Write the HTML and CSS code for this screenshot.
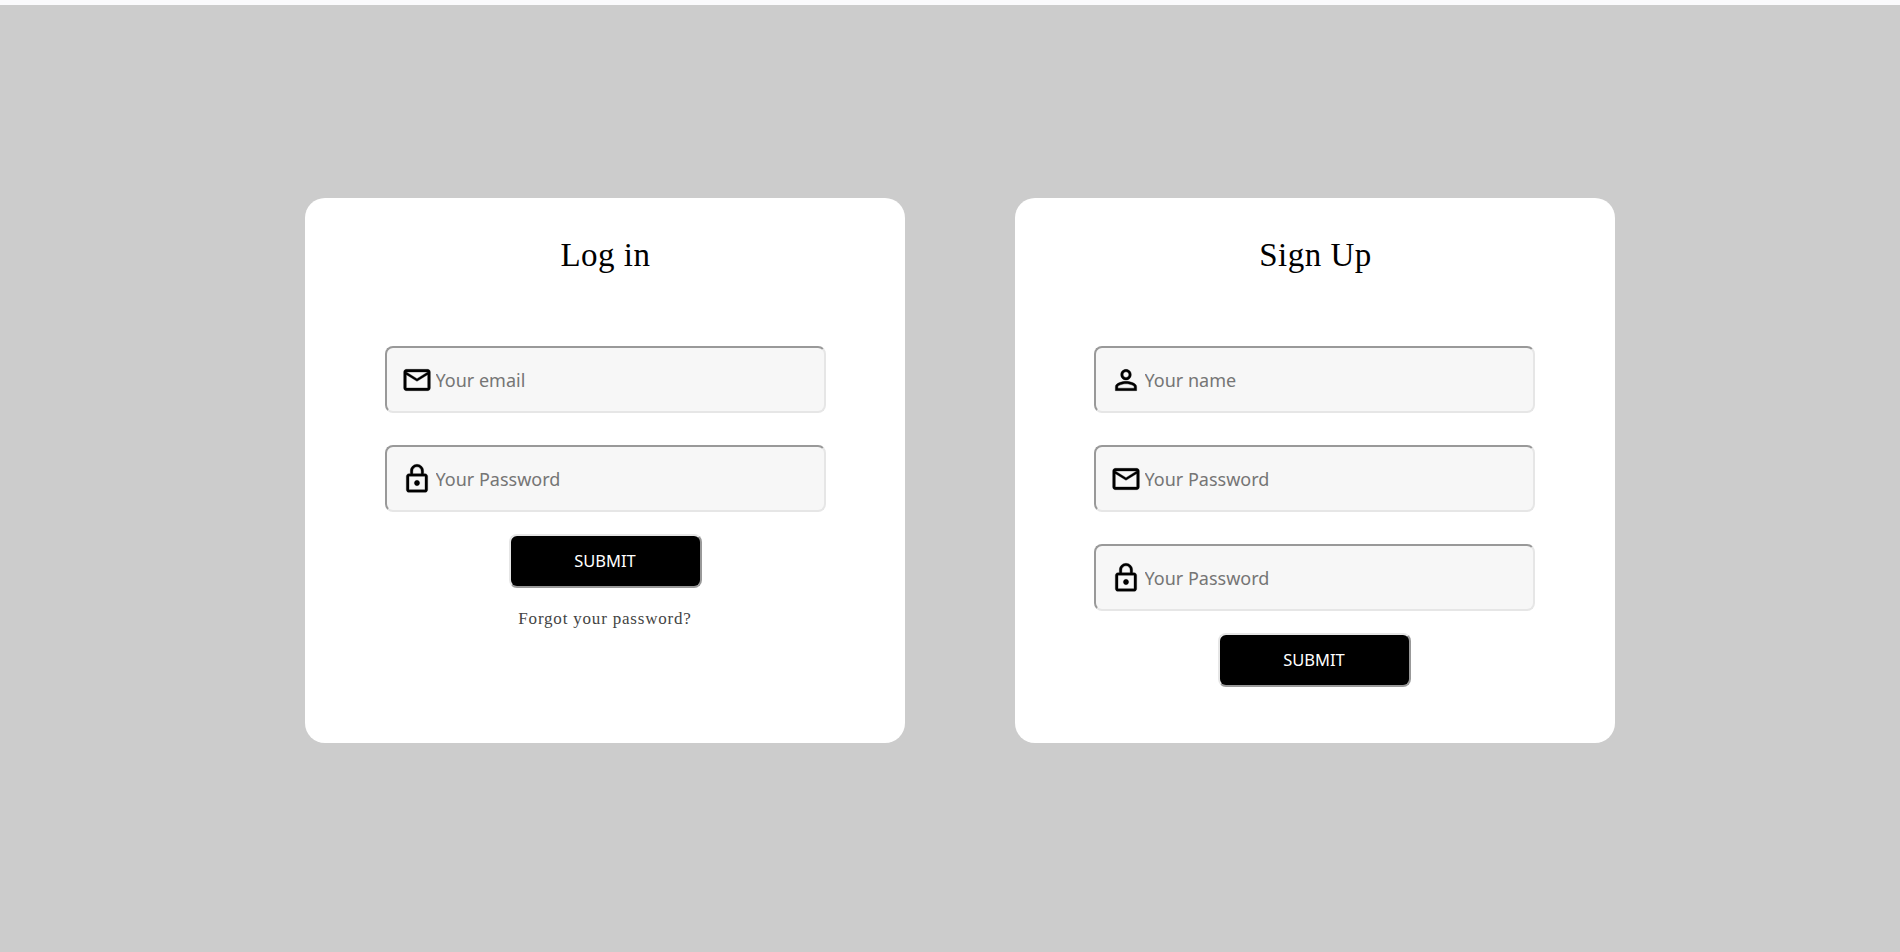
FILE: index.html
```html
<!DOCTYPE html>
<html lang="en">
<head>
    <meta charset="UTF-8">
    <title>Log in / Sign Up</title>
    <link rel="stylesheet" href="styles.css">
</head>
<body>
    <div class="top-strip"></div>
    <div class="forms">
        <form class="card">
            <h2>Log in</h2>
            <label class="field">
                <svg class="icon" viewBox="0 0 24 24"><path d="M20 4H4c-1.1 0-1.99.9-1.99 2L2 18c0 1.1.9 2 2 2h16c1.1 0 2-.9 2-2V6c0-1.1-.9-2-2-2zm0 14H4V8l8 5 8-5v10zm-8-7L4 6h16l-8 5z"/></svg>
                <input type="text" placeholder="Your email">
            </label>
            <label class="field">
                <svg class="icon" viewBox="0 0 24 24"><path d="M12 17c1.1 0 2-.9 2-2s-.9-2-2-2-2 .9-2 2 .9 2 2 2zm6-9h-1V6c0-2.76-2.24-5-5-5S7 3.24 7 6v2H6c-1.1 0-2 .9-2 2v10c0 1.1.9 2 2 2h12c1.1 0 2-.9 2-2V10c0-1.1-.9-2-2-2zM8.9 6c0-1.71 1.39-3.1 3.1-3.1s3.1 1.39 3.1 3.1v2H8.9V6zM18 20H6V10h12v10z"/></svg>
                <input type="password" placeholder="Your Password">
            </label>
            <button type="button" class="submit-btn">SUBMIT</button>
            <a class="forgot">Forgot your password?</a>
        </form>
        <form class="card">
            <h2>Sign Up</h2>
            <label class="field">
                <svg class="icon" viewBox="0 0 24 24"><path d="M12 5.9c1.16 0 2.1.94 2.1 2.1s-.94 2.1-2.1 2.1S9.9 9.16 9.9 8s.94-2.1 2.1-2.1m0 9c2.97 0 6.1 1.46 6.1 2.1v1.1H5.9V17c0-.64 3.13-2.1 6.1-2.1M12 4C9.79 4 8 5.79 8 8s1.79 4 4 4 4-1.79 4-4-1.79-4-4-4zm0 9c-2.67 0-8 1.34-8 4v3h16v-3c0-2.66-5.33-4-8-4z"/></svg>
                <input type="text" placeholder="Your name">
            </label>
            <label class="field">
                <svg class="icon" viewBox="0 0 24 24"><path d="M20 4H4c-1.1 0-1.99.9-1.99 2L2 18c0 1.1.9 2 2 2h16c1.1 0 2-.9 2-2V6c0-1.1-.9-2-2-2zm0 14H4V8l8 5 8-5v10zm-8-7L4 6h16l-8 5z"/></svg>
                <input type="text" placeholder="Your Password">
            </label>
            <label class="field">
                <svg class="icon" viewBox="0 0 24 24"><path d="M12 17c1.1 0 2-.9 2-2s-.9-2-2-2-2 .9-2 2 .9 2 2 2zm6-9h-1V6c0-2.76-2.24-5-5-5S7 3.24 7 6v2H6c-1.1 0-2 .9-2 2v10c0 1.1.9 2 2 2h12c1.1 0 2-.9 2-2V10c0-1.1-.9-2-2-2zM8.9 6c0-1.71 1.39-3.1 3.1-3.1s3.1 1.39 3.1 3.1v2H8.9V6zM18 20H6V10h12v10z"/></svg>
                <input type="password" placeholder="Your Password">
            </label>
            <button type="button" class="submit-btn">SUBMIT</button>
        </form>
    </div>
</body>
</html>
```
FILE: styles.css
```css
body { margin: 0; background: #ccc; font-family: "Liberation Serif", serif; overflow: hidden; }
.top-strip { height: 5px; background: #fafafc; }
.forms { display: flex; gap: 110px; padding: 193px 0 0 305px; }
.card { box-sizing: border-box; width: 600px; height: 545px; padding-top: 36px; background: #fff; border-radius: 20px; display: flex; flex-direction: column; align-items: center; }
h2 { margin: 0 0 76px; padding-left: 1px; height: 36px; line-height: 42px; font-size: 33px; font-weight: normal; letter-spacing: 0.5px; color: #000; }
.field { box-sizing: border-box; width: 441px; height: 67px; margin-bottom: 32px; padding-left: 14px; display: flex; align-items: center; background: #f7f7f7; border: 2px solid; border-color: #999 #e6e6e6 #e6e6e6 #999; border-radius: 8px; }
.card + .card .field, .card + .card .submit-btn { margin-right: 2px; }
.icon { width: 32px; height: 32px; flex: none; fill: #000; stroke: #000; stroke-width: 0.25; }
.field input { flex: 1; min-width: 0; padding: 1px 0 0 3px; border: none; outline: none; background: transparent; font-family: "Noto Sans", sans-serif; font-size: 18px; color: #333; }
.field input::placeholder { color: #757575; opacity: 1; }
.submit-btn { width: 193px; height: 54px; margin-top: -10px; padding: 0 0 2px; background: #000; color: #fff; border: 2px solid; border-color: #e6e6e6 #999 #999 #e6e6e6; border-radius: 8px; font-family: "Noto Sans", sans-serif; font-size: 16.5px; }
.forgot { margin-top: 21px; font-size: 17px; letter-spacing: 0.8px; color: #444; }
```
